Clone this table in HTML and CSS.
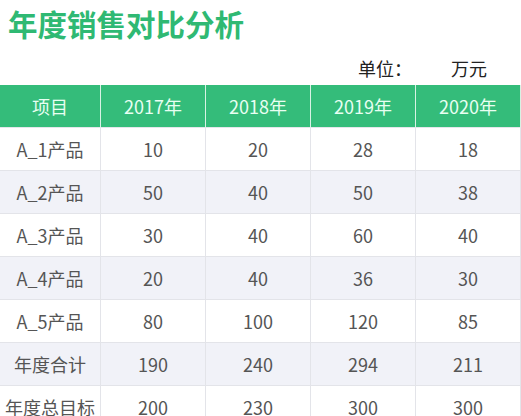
FILE: index.html
```html
<!DOCTYPE html>
<html lang="zh-CN">
<head>
<meta charset="utf-8">
<title>年度销售对比分析</title>
<link rel="stylesheet" href="styles.css">
</head>
<body>
<div class="page">
  <h1 class="title">年度销售对比分析</h1>
  <div class="unit-row">
    <span class="unit-label">单位：</span>
    <span class="unit-value">万元</span>
  </div>
  <table class="sales">
    <colgroup>
      <col class="c1"><col class="cn"><col class="cn"><col class="cn"><col class="cn">
    </colgroup>
    <thead>
      <tr><th>项目</th><th>2017年</th><th>2018年</th><th>2019年</th><th>2020年</th></tr>
    </thead>
    <tbody>
      <tr><td>A_1产品</td><td>10</td><td>20</td><td>28</td><td>18</td></tr>
      <tr class="alt"><td>A_2产品</td><td>50</td><td>40</td><td>50</td><td>38</td></tr>
      <tr><td>A_3产品</td><td>30</td><td>40</td><td>60</td><td>40</td></tr>
      <tr class="alt"><td>A_4产品</td><td>20</td><td>40</td><td>36</td><td>30</td></tr>
      <tr><td>A_5产品</td><td>80</td><td>100</td><td>120</td><td>85</td></tr>
      <tr class="alt"><td>年度合计</td><td>190</td><td>240</td><td>294</td><td>211</td></tr>
      <tr><td>年度总目标</td><td>200</td><td>230</td><td>300</td><td>300</td></tr>
    </tbody>
  </table>
</div>
</body>
</html>
```
FILE: styles.css
```css
html, body {
  margin: 0;
  padding: 0;
  background: #ffffff;
}
body {
  font-family: "Noto Sans CJK SC", "Noto Sans", sans-serif;
  color: #555555;
  overflow: hidden;
}
.page {
  width: 521px;
}
.title {
  margin: 0;
  padding: 0 8px;
  font-size: 29.5px;
  line-height: 46px;
  height: 46px;
  font-weight: 700;
  color: #2fb973;
}
.unit-row {
  height: 39px;
  display: flex;
  justify-content: flex-end;
  align-items: center;
  font-size: 18px;
  line-height: 26px;
  color: #222222;
  padding-right: 34px;
  padding-top: 4px;
  box-sizing: border-box;
}
.unit-value {
  margin-left: 39px;
}
.sales {
  width: 521px;
  table-layout: fixed;
  border-collapse: separate;
  border-spacing: 0;
  font-size: 18px;
}
.c1 { width: 101px; }
.cn { width: 105px; }
.sales th,
.sales td {
  height: 42px;
  padding: 0;
  text-align: center;
  vertical-align: middle;
  white-space: nowrap;
  overflow: hidden;
  box-sizing: content-box;
}
.sales th {
  background: #34bc7a;
  color: #e8fff2;
  font-weight: 400;
  border-right: 1px solid #d8f2e4;
  border-bottom: 1px solid #e4e6ea;
}
.sales td {
  background: #ffffff;
  color: #555555;
  border-right: 1px solid #e3e4e9;
  border-bottom: 1px solid #e3e4e9;
}
.sales tr.alt td {
  background: #f1f2f8;
}
```
